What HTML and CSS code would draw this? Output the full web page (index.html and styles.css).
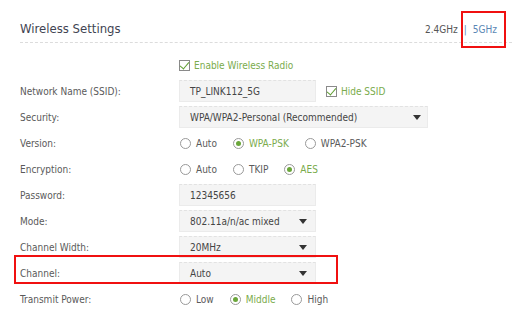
FILE: index.html
```html
<!DOCTYPE html>
<html lang="en">
<head>
  <meta charset="UTF-8">
  <title>Wireless Settings</title>
  <link rel="stylesheet" href="styles.css">
</head>
<body>
  <div class="panel">
    <div class="head">
      <h2>Wireless Settings</h2>
      <div class="bands">
        <span>2.4GHz</span>
        <span class="sep">|</span>
        <span class="band-on marked">5GHz</span>
      </div>
    </div>

    <div class="row">
      <span class="label"></span>
      <label class="check on"><i class="box"></i>Enable Wireless Radio</label>
    </div>

    <div class="row">
      <span class="label">Network Name (SSID):</span>
      <div class="field">TP_LINK112_5G</div>
      <label class="check on hide"><i class="box"></i>Hide SSID</label>
    </div>

    <div class="row">
      <span class="label">Security:</span>
      <div class="field select wide">WPA/WPA2-Personal (Recommended)<i class="arrow"></i></div>
    </div>

    <div class="row">
      <span class="label">Version:</span>
      <label class="radio"><i class="dot"></i>Auto</label>
      <label class="radio on"><i class="dot"></i>WPA-PSK</label>
      <label class="radio"><i class="dot"></i>WPA2-PSK</label>
    </div>

    <div class="row">
      <span class="label">Encryption:</span>
      <label class="radio"><i class="dot"></i>Auto</label>
      <label class="radio"><i class="dot"></i>TKIP</label>
      <label class="radio on"><i class="dot"></i>AES</label>
    </div>

    <div class="row">
      <span class="label">Password:</span>
      <div class="field">12345656</div>
    </div>

    <div class="row">
      <span class="label">Mode:</span>
      <div class="field select">802.11a/n/ac mixed<i class="arrow"></i></div>
    </div>

    <div class="row">
      <span class="label">Channel Width:</span>
      <div class="field select">20MHz<i class="arrow"></i></div>
    </div>

    <div class="row marked-row">
      <span class="label">Channel:</span>
      <div class="field select">Auto<i class="arrow"></i></div>
    </div>

    <div class="row">
      <span class="label">Transmit Power:</span>
      <label class="radio"><i class="dot"></i>Low</label>
      <label class="radio on"><i class="dot"></i>Middle</label>
      <label class="radio"><i class="dot"></i>High</label>
    </div>
  </div>
</body>
</html>
```

FILE: styles.css
```css
body {
  margin: 0;
  background: #fff;
  font-family: "DejaVu Sans Condensed", "DejaVu Sans", Verdana, sans-serif;
  font-size: 10px;
  color: #5a5a5a;
}

.panel {
  padding-left: 20px;
}

.head {
  display: flex;
  justify-content: space-between;
  align-items: flex-end;
  box-sizing: border-box;
  height: 43px;
  padding: 0 15px 6px 0;
  border-bottom: 1px dashed #dcdcdc;
  margin-bottom: 9px;
}
.head h2 {
  margin: 0;
  font-size: 13px;
  font-weight: normal;
  color: #3f4452;
}
.bands {
  display: flex;
  gap: 6px;
  padding-bottom: 1px;
  color: #555;
}
.bands .sep,
.band-on {
  color: #5b87b5;
}
.marked {
  position: relative;
}
.marked::after {
  content: "";
  position: absolute;
  left: -12px;
  top: -13px;
  width: 41px;
  height: 33px;
  border: 2px solid #f01010;
}

.row {
  display: flex;
  align-items: center;
  height: 26px;
}
.label {
  width: 159px;
  flex: none;
}
.marked-row {
  position: relative;
}
.marked-row::after {
  content: "";
  position: absolute;
  left: -6px;
  top: -5px;
  width: 320px;
  height: 25px;
  border: 2px solid #f01010;
}

.field {
  box-sizing: border-box;
  width: 137px;
  height: 22px;
  padding: 0 8px 0 10px;
  display: flex;
  align-items: center;
  background: #f4f4f4;
  border: 1px solid #ebebeb;
  border-top: 1px dashed #e2e2e2;
  color: #444;
}
.select {
  justify-content: space-between;
}
.wide {
  width: 249px;
  padding-right: 6px;
}
.arrow {
  width: 0;
  height: 0;
  border-left: 4px solid transparent;
  border-right: 4px solid transparent;
  border-top: 5px solid #333;
}

.check {
  display: flex;
  align-items: center;
  color: #7aab4c;
}
.check .box {
  position: relative;
  width: 9px;
  height: 9px;
  border: 1px solid #8a8a8a;
  margin-right: 4px;
}
.check .box::after {
  content: "";
  position: absolute;
  left: 2px;
  top: -1px;
  width: 4px;
  height: 8px;
  border-right: 1.5px solid #5f9e32;
  border-bottom: 1.5px solid #5f9e32;
  transform: rotate(40deg);
}
.hide {
  margin-left: 10px;
}

.radio {
  display: flex;
  align-items: center;
  margin-right: 15px;
  color: #5a5a5a;
}
.radio .dot {
  box-sizing: border-box;
  width: 11px;
  height: 11px;
  border: 1px solid #999;
  border-radius: 50%;
  margin: 0 5px 0 1px;
  display: flex;
  align-items: center;
  justify-content: center;
}
.radio.on {
  color: #7aab4c;
}
.radio.on .dot::after {
  content: "";
  width: 5px;
  height: 5px;
  border-radius: 50%;
  background: #6aa63a;
}
```
